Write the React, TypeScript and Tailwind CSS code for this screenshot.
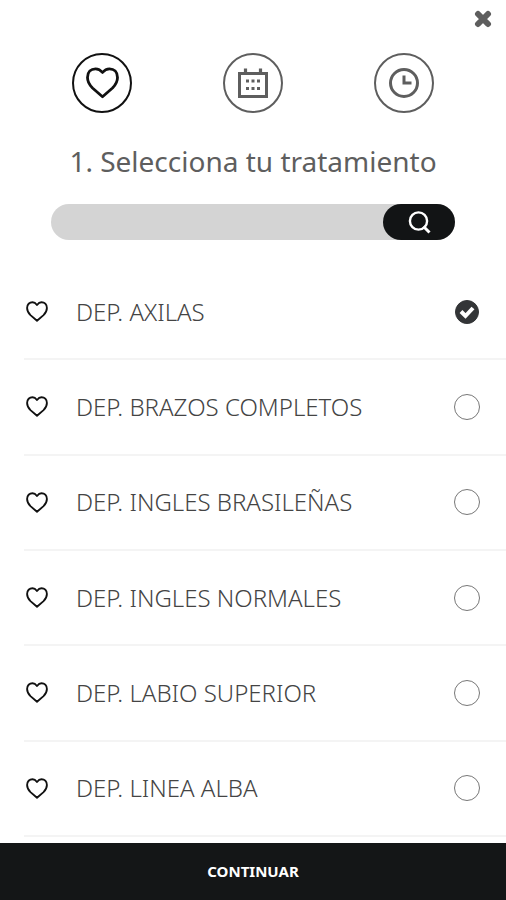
import { useState } from "react";

const treatments = [
  "DEP. AXILAS",
  "DEP. BRAZOS COMPLETOS",
  "DEP. INGLES BRASILEÑAS",
  "DEP. INGLES NORMALES",
  "DEP. LABIO SUPERIOR",
  "DEP. LINEA ALBA",
];

const heartPath =
  "M16 5.5C14 2.8 12 1.5 9.5 1.5C5 1.5 1.6 4.6 1.6 10C1.6 14.5 3.5 17.5 6.5 20.3L16 28.5L25.5 20.3C28.5 17.5 30.4 14.5 30.4 10C30.4 4.6 27 1.5 22.5 1.5C20 1.5 18 2.8 16 5.5Z";

function StepHeart() {
  return (
    <svg viewBox="0 0 60 60" className="size-full" fill="none" stroke="currentColor" aria-hidden="true">
      <circle cx="30" cy="30" r="29" strokeWidth="2" />
      <path
        d="M30.5 19.5C28.5 17 26 15.8 23.5 15.8C19 15.8 15.5 19 15.5 24.5C15.5 28.5 17.5 32 20.5 35L30.5 43.7L40.5 35C43.5 32 45.5 28.5 45.5 24.5C45.5 19 42 15.8 37.5 15.8C35 15.8 32.5 17 30.5 19.5Z"
        strokeWidth="2.8"
        strokeLinejoin="round"
      />
    </svg>
  );
}

function StepCalendar() {
  return (
    <svg viewBox="0 0 60 60" className="size-full" fill="none" stroke="currentColor" aria-hidden="true">
      <circle cx="30" cy="30" r="29" strokeWidth="2" />
      <rect x="16.5" y="20.5" width="27" height="23" strokeWidth="3" />
      <path d="M22.5 15.5V20M37.5 15.5V20" strokeWidth="3.2" />
      <g fill="currentColor" stroke="none">
        <rect x="23" y="26.5" width="3" height="3" />
        <rect x="28.5" y="26.5" width="3" height="3" />
        <rect x="34" y="26.5" width="3" height="3" />
        <rect x="23" y="34" width="3" height="3" />
        <rect x="28.5" y="34" width="3" height="3" />
        <rect x="34" y="34" width="3" height="3" />
      </g>
    </svg>
  );
}

function StepClock() {
  return (
    <svg viewBox="0 0 60 60" className="size-full" fill="none" stroke="currentColor" aria-hidden="true">
      <circle cx="30" cy="30" r="29" strokeWidth="2" />
      <circle cx="30" cy="30" r="13.5" strokeWidth="3" />
      <path d="M30 22.5V30H37.5" strokeWidth="3" />
    </svg>
  );
}

export default function App() {
  const [selected, setSelected] = useState(treatments[0]);
  return (
    <main className="flex min-h-screen flex-col bg-white font-['Noto_Sans',sans-serif] text-[#5e5e5e]">
      <header className="flex h-[53px] items-start justify-end px-3 pt-2">
        <button type="button" aria-label="Cerrar" className="flex size-[22px] items-center justify-center">
          <svg viewBox="0 0 18 18" className="size-[18px]" aria-hidden="true">
            <path d="M4 4L14 14M14 4L4 14" stroke="currentColor" strokeWidth="6" strokeLinecap="round" />
          </svg>
        </button>
      </header>

      <nav aria-label="Pasos" className="flex justify-between px-[72px]">
        <button type="button" aria-label="Tratamiento" aria-current="step" className="size-[60px] text-[#111]">
          <StepHeart />
        </button>
        <button type="button" aria-label="Fecha" className="size-[60px]">
          <StepCalendar />
        </button>
        <button type="button" aria-label="Hora" className="size-[60px]">
          <StepClock />
        </button>
      </nav>

      <h1 className="mt-7 text-center text-[28px] leading-10">1. Selecciona tu tratamiento</h1>

      <form
        className="mx-[51px] mt-[23px] flex h-9 rounded-full bg-[#d4d4d4]"
        onSubmit={(e) => e.preventDefault()}
      >
        <input type="text" aria-label="Buscar tratamiento" className="min-w-0 flex-1 rounded-full bg-transparent px-5 text-lg outline-none" />
        <button type="submit" aria-label="Buscar" className="flex w-[72px] items-center justify-center rounded-full bg-[#121415] text-white">
          <svg viewBox="0 0 24 24" className="size-6" fill="none" stroke="currentColor" strokeWidth="2.4" aria-hidden="true">
            <circle cx="11.5" cy="11" r="8.6" />
            <path d="M16.5 16.5L22.5 22.5" strokeWidth="3" />
          </svg>
        </button>
      </form>

      <ul className="mt-[25px] flex flex-1 flex-col pb-1.5 pl-6">
        {treatments.map((name) => (
          <li key={name} className="flex min-h-20 flex-1 border-b-2 border-[#f4f4f4]">
            <label className="flex flex-1 items-center pr-[26px]">
              <svg viewBox="0 0 32 30" className="ml-0.5 h-[21px] w-[22px] text-[#111]" fill="none" stroke="currentColor" strokeWidth="2.7" strokeLinejoin="round" aria-hidden="true">
                <path d={heartPath} />
              </svg>
              <span className="ml-7 flex-1 text-2xl font-light text-[#444]">{name}</span>
              <span className="grid size-[26px] place-items-center">
                <input
                  type="radio"
                  name="treatment"
                  checked={selected === name}
                  onChange={() => setSelected(name)}
                  className="peer col-start-1 row-start-1 size-[26px] appearance-none rounded-full border border-[#777] checked:size-6 checked:border-[#333537] checked:bg-[#333537]"
                />
                <svg viewBox="0 0 24 24" className="pointer-events-none invisible col-start-1 row-start-1 size-6 text-white peer-checked:visible" fill="none" stroke="currentColor" strokeWidth="4" aria-hidden="true">
                  <path d="M6 11.5L10.5 16L18 8" />
                </svg>
              </span>
            </label>
          </li>
        ))}
      </ul>

      <button type="button" className="h-[57px] w-full bg-[#141617] pb-0.5 text-[15px] leading-5 font-bold text-white">
        CONTINUAR
      </button>
    </main>
  );
}
